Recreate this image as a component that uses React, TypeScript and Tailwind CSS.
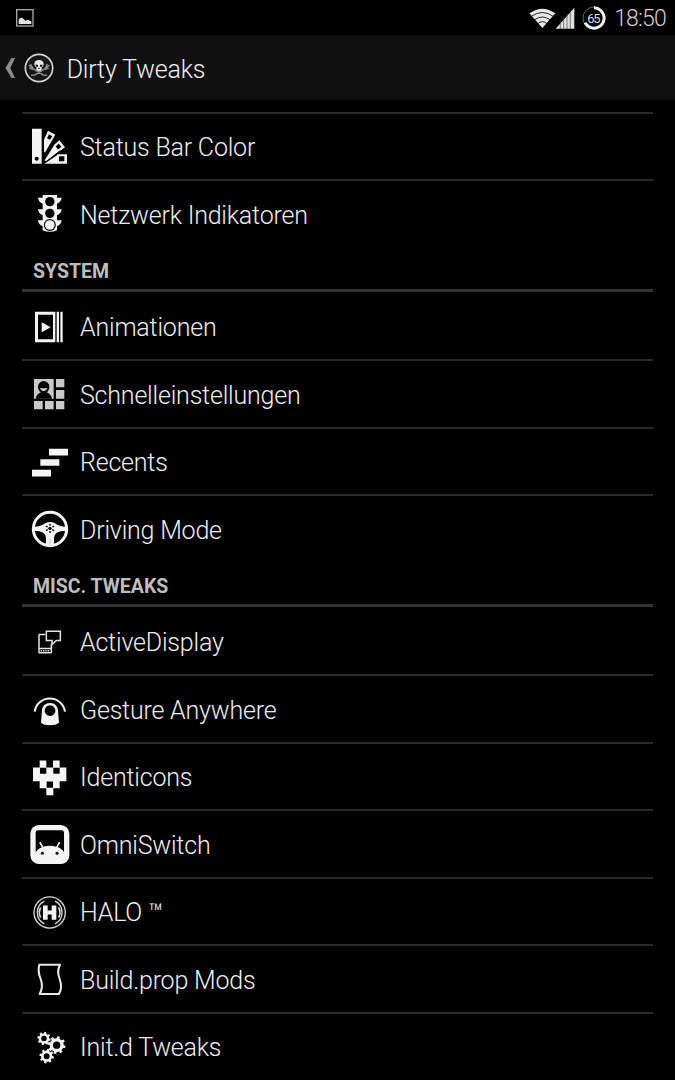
import type { ReactNode } from 'react'

interface Item {
    label: string
    icon: ReactNode
}

interface Section {
    title?: string
    items: Item[]
}

function Glyph({ box, children }: { box: string; children: ReactNode }) {
    return (
        <svg viewBox={box} className="h-10 w-10 shrink-0" fill="#f4f4f4">
            {children}
        </svg>
    )
}

const TEETH = [0, 45, 90, 135, 180, 225, 270, 315]

function Gear({ x, y, r }: { x: number; y: number; r: number }) {
    return (
        <g transform={`translate(${x} ${y})`}>
            <circle r={r} fill="none" stroke="#f4f4f4" strokeWidth={r * 0.62} />
            {TEETH.map(a => (
                <rect key={a} x={-r * 0.26} y={-r * 1.66} width={r * 0.52} height={r * 0.5} transform={`rotate(${a + 12})`} />
            ))}
        </g>
    )
}

const SwatchIcon = () => (
    <Glyph box="30 19.5 120 120">
        <path fillRule="evenodd" d="M36 25h29v105H36zM50 109a6 6 0 1 0 .1 0z" />
        <path fillRule="evenodd" d="M84 31l22 12-31 53-3-2V58zM87 41l-6 12 9 5 7-11z" />
        <path fillRule="evenodd" d="M118 59l17 21-57 42-4-3 30-48zM116 69l-9 9 7 9 10-8z" />
        <path fillRule="evenodd" d="M113 101h28v29H73l37-25zM117 107v15h16v-15z" />
        <path d="M73 110L104 64M76 126l45-36" stroke="#000" strokeWidth="3" />
    </Glyph>
)

const TrafficLightIcon = () => (
    <Glyph box="30 222 120 120">
        <path d="M68 225h43v8h14c-1 9-6 15-14 18v17h14c-1 9-6 15-14 18v15h14c-1 9-6 15-14 18v12q-21 9-43 0v-12c-8-3-13-9-14-18h14v-15c-8-3-13-9-14-18h14v-17c-8-3-13-9-14-18h14z" />
        <g fill="#000">
            <circle cx="89.500" cy="245" r="14" />
            <circle cx="89.500" cy="280" r="14" />
            <circle cx="89.500" cy="315" r="18" />
        </g>
        <circle cx="89.500" cy="315" r="14.500" />
    </Glyph>
)

const AnimationIcon = () => (
    <Glyph box="30 19.5 120 120">
        <path fillRule="evenodd" d="M45 34h61v91H45zM54 43v73h45V43z" />
        <path d="M65 65l27 15-27 15zM110 34h7v91h-7zM121 34h7v91h-7z" />
    </Glyph>
)

const QuickSettingsIcon = () => (
    <Glyph box="30 222 120 120">
        <path
            d="M42 237h59v59H42zM108 237h25v25h-25zM108 270h25v26h-25zM42 303h26v25H42zM75 303h26v25H75zM108 303h25v25h-25z"
            fill="#c9c9c9"
        />
        <path d="M71 243a17 17 0 0 1 17 17c0 8-4 14-8 17 8 3 14 9 16 19H47c2-10 8-16 16-19-5-3-9-9-9-17a17 17 0 0 1 17-17z" fill="#000" />
        <path d="M60 263q11 4 22 0-3 10-11 10t-11-10z" fill="#c9c9c9" />
    </Glyph>
)

const RecentsIcon = () => (
    <Glyph box="30 19.5 120 120">
        <path d="M87 40h57v20H87zM61 71h57v20H61zM36 103h57v20H36z" />
    </Glyph>
)

const WheelIcon = () => (
    <Glyph box="30 222 120 120">
        <circle cx="90" cy="282" r="50" fill="none" stroke="#f4f4f4" strokeWidth="9" />
        <path d="M42 275c16 1 25-4 33-10q15-8 30 0c8 6 17 11 33 10v13c-20-1-30 4-34 13-3 8-2 21-1 31H77c1-10 2-23-1-31-4-9-14-14-34-13z" />
        <g transform="translate(90 280)" stroke="#000" strokeWidth="4">
            {[30, 90, 150, 210, 270, 330].map(a => (
                <path key={a} d="M8 0h6" transform={`rotate(${a})`} />
            ))}
            <circle r="5" stroke="none" fill="#000" />
        </g>
        <path d="M90 310v24" stroke="#bbb" strokeWidth="2" />
    </Glyph>
)

const ActiveDisplayIcon = () => (
    <Glyph box="30 19.5 120 120">
        <g fill="none" stroke="#e4e4e4" strokeWidth="4.500">
            <path d="M76 57H59q-2 0-2 2v51q0 2 2 2h33q2 0 2-2V86M57 99h37" />
            <path d="M79 47h42v28h-12L96 87V75H79z" />
            <path d="M62 106h28" strokeDasharray="4 3" />
        </g>
    </Glyph>
)

const GestureIcon = () => (
    <Glyph box="30 222 120 120">
        <path d="M44 290a46 46 0 0 1 91 0" fill="none" stroke="#f4f4f4" strokeWidth="6" />
        <path fillRule="evenodd" d="M90 264c14 0 23 9 24 23l3 36c-10 10-44 10-54 0l3-36c1-14 10-23 24-23zM90 271a16 16 0 1 0 .1 0z" />
    </Glyph>
)

const IdenticonIcon = () => (
    <Glyph box="30 19.5 120 120">
        <path d="M59 30h20v21h20V30h20v21h20v41h-20v21h-19v21H79v-21H59V92H39V51h20z" />
        <path d="M60 52h19v18H60zM100 52h19v18h-19zM80 93h19v19H80z" fill="#000" />
    </Glyph>
)

const OmniSwitchIcon = () => (
    <Glyph box="30 222 120 120">
        <rect x="31" y="225" width="117" height="117" rx="26" />
        <path d="M56 241h69q7 0 7 7v58c-5-7-12-12-20-15l8-13-3-2-8 14q-20-5-39 0l-8-14-3 2 8 13c-8 3-15 8-20 16v-59q0-7 9-7z" fill="#000" />
        {/* antennae */}
        <path d="M59 277l9 15M119 277l-9 15" stroke="#f4f4f4" strokeWidth="4" />
        <circle cx="67" cy="310" r="4.500" fill="#000" />
        <circle cx="111" cy="310" r="4.500" fill="#000" />
    </Glyph>
)

const HaloIcon = () => (
    <Glyph box="30 19.5 120 120">
        <g fill="none" stroke="#d8d8d8">
            <circle cx="89" cy="81" r="47" strokeWidth="4" />
            <path d="M73 47a38 38 0 0 0 0 68M105 47a38 38 0 0 1 0 68" strokeWidth="4" />
            <path d="M62 66a32 32 0 0 0 0 30M116 66a32 32 0 0 1 0 30" strokeWidth="5" />
        </g>
        <path d="M69 60h14v15h12V60h14v43H95V87H83v16H69z" />
    </Glyph>
)

const BuildPropIcon = () => (
    <Glyph box="30 222 120 120">
        <path
            d="M58 239h62c-9 17-7 28-1 43 6 16 7 29-2 45H59c9-16 9-29 3-45-6-15-9-26-4-43z"
            fill="none"
            stroke="#ececec"
            strokeWidth="6"
            strokeLinejoin="round"
        />
    </Glyph>
)

const InitIcon = () => (
    <Glyph box="30 49.5 120 120">
        <Gear x={72} y={84} r={12} />
        <Gear x={110} y={104} r={16} />
        <Gear x={80} y={137} r={13} />
    </Glyph>
)

const SECTIONS: Section[] = [
    {
        items: [
            { label: 'Status Bar Color', icon: <SwatchIcon /> },
            { label: 'Netzwerk Indikatoren', icon: <TrafficLightIcon /> },
        ],
    },
    {
        title: 'SYSTEM',
        items: [
            { label: 'Animationen', icon: <AnimationIcon /> },
            { label: 'Schnelleinstellungen', icon: <QuickSettingsIcon /> },
            { label: 'Recents', icon: <RecentsIcon /> },
            { label: 'Driving Mode', icon: <WheelIcon /> },
        ],
    },
    {
        title: 'MISC. TWEAKS',
        items: [
            { label: 'ActiveDisplay', icon: <ActiveDisplayIcon /> },
            { label: 'Gesture Anywhere', icon: <GestureIcon /> },
            { label: 'Identicons', icon: <IdenticonIcon /> },
            { label: 'OmniSwitch', icon: <OmniSwitchIcon /> },
            { label: 'HALO ™', icon: <HaloIcon /> },
            { label: 'Build.prop Mods', icon: <BuildPropIcon /> },
            { label: 'Init.d Tweaks', icon: <InitIcon /> },
        ],
    },
]

function StatusBar() {
    return (
        <div className="flex h-[35px] shrink-0 items-center justify-between bg-black pl-4 pr-[9px]">
            <svg viewBox="0 0 54 54" className="h-[18px] w-[18px]">
                <rect x="2" y="2" width="49" height="49" fill="none" stroke="#a8a8a8" strokeWidth="4" />
                <path d="M8 45V32c4-7 9-8 14-3l7 7c4-5 8-4 11-1l6 2v8z" fill="#e2e2e2" />
            </svg>
            <div className="flex items-center">
                <svg viewBox="0 0 80 60" className="h-5 w-[26.7px]">
                    <path d="M1 16Q40-12 79 16L40 60z" fill="#e6e6e6" />
                    <path d="M7 25q33-23 66 0M16 36q24-18 48 0M26 47q14-12 28 0" fill="none" stroke="#000" strokeWidth="2.500" />
                </svg>
                <svg viewBox="0 0 60 66" className="-ml-px h-[22px] w-5">
                    <path d="M2 65L58 2v63z" fill="#e0e0e0" />
                    <path d="M16 40v26M26 30v36M36 20v46M46 10v56" stroke="#444" strokeWidth="2" />
                </svg>
                <svg viewBox="0 0 72 78" className="ml-[7px] h-[26px] w-6">
                    <circle cx="36" cy="39" r="33" fill="none" stroke="#666" strokeWidth="3" />
                    <path d="M36 8.500a30.500 30.500 0 1 1-27 45" fill="none" stroke="#f0f0f0" strokeWidth="9" />
                    <text x="36" y="53" textAnchor="middle" fontSize="39" fill="#ddd" textLength="40" className="font-[Roboto,sans-serif]">65</text>
                </svg>
                <span className="mt-[2px] ml-[8px] text-[23px] leading-none font-light tracking-[-0.8px] text-[#d0d0d0]">18:50</span>
            </div>
        </div>
    )
}

function ActionBar() {
    return (
        <header className="flex h-[65px] shrink-0 items-center bg-[#101010] pl-[5px]">
            <svg viewBox="0 0 32 60" className="h-5 w-[10.7px]">
                <path d="M20 0h10L16 30l14 30H20L1 30z" fill="#8d8d8d" />
            </svg>
            <svg viewBox="0 0 90 90" className="ml-2 h-[30px] w-[30px]">
                <circle cx="45" cy="45" r="41" fill="#161616" stroke="#d4d4d4" strokeWidth="5" />
                <path d="M14 36l14 12 30 18 11 1M76 36L62 48 32 66l-11 1M16 45l12 5M74 45l-12 5M20 33l8 16M70 33l-8 16" stroke="#8a8a8a" strokeWidth="4.500" fill="none" />
                <path d="M45 21c9 0 14 5 14 12 0 5-2 8-6 10v8c-4 4-12 4-16 0v-8c-4-2-6-5-6-10 0-7 5-12 14-12z" fill="#e8e8e8" />
                <path d="M34 35h8v6h-6zM48 35h8l-2 6h-6zM43 44h4v4h-4z" fill="#161616" />
            </svg>
            <h1 className="mt-[3px] ml-[13px] text-[25px] leading-none font-light tracking-[-0.2px] text-[#eeeeee]">Dirty Tweaks</h1>
        </header>
    )
}

export default function App() {
    return (
        <div className="flex h-[1080px] w-[675px] flex-col overflow-hidden bg-black font-[Roboto,'Noto_Sans',sans-serif]">
            <StatusBar />
            <ActionBar />
            <main className="mt-[11.75px] ml-[22px] w-[631px] shrink-0 border-t-2 border-[#2a2a2a]">
                {SECTIONS.map((section, i) => (
                    <section key={i}>
                        {section.title && (
                            <div className="mb-[1.5px] flex h-[43.5px] items-center border-b-3 border-[#333333] pl-[11px]">
                                <h2 className="mt-[5px] text-[19.5px] leading-none font-bold text-[#bdbdbd]">{section.title}</h2>
                            </div>
                        )}
                        {section.items.map((item, j) => {
                            const last = j === section.items.length - 1
                            return (
                                <div
                                    key={item.label}
                                    className={`flex h-[67.5px] items-center border-b-2 pl-2 ${last ? 'border-transparent' : 'border-[#2a2a2a]'}`}
                                >
                                    {item.icon}
                                    <span className="mt-[2px] ml-2.5 text-[25px] leading-none font-light tracking-[-0.2px] whitespace-pre text-[#eeeeee]">
                                        {item.label}
                                    </span>
                                </div>
                            )
                        })}
                    </section>
                ))}
            </main>
        </div>
    )
}
